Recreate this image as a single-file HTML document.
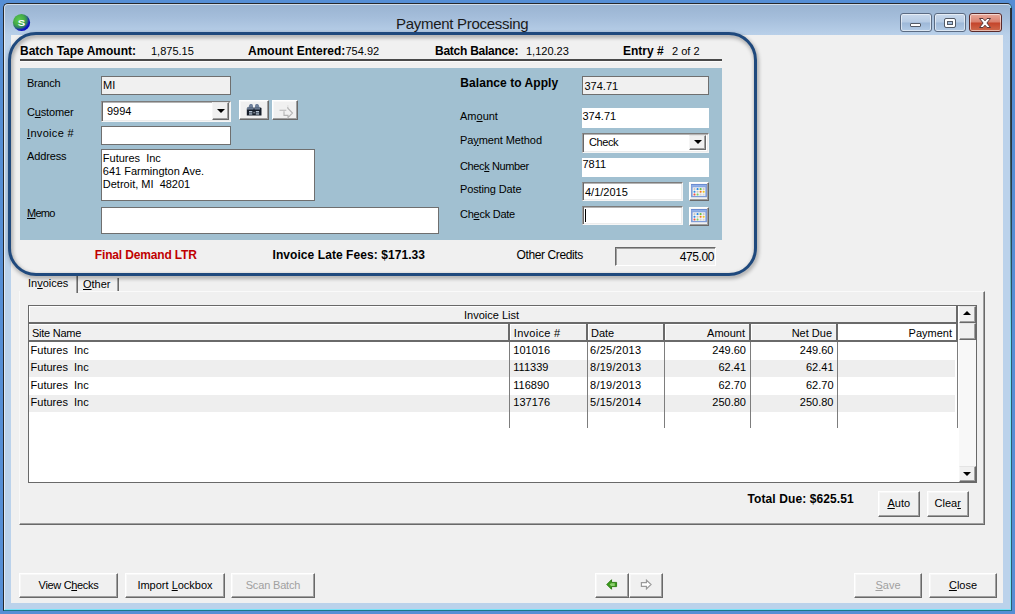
<!DOCTYPE html>
<html>
<head>
<meta charset="utf-8">
<title>Payment Processing</title>
<style>
*{box-sizing:border-box;margin:0;padding:0}
html,body{width:1015px;height:614px;overflow:hidden;background:#558ed5;font-family:"Liberation Sans",sans-serif;font-size:11px;color:#000}
.abs,.t,.b,.lbl{position:absolute}
#win{position:absolute;left:3px;top:3px;width:1009px;height:608px;border-radius:5px 5px 0 0;background:linear-gradient(#99b3d1 0px,#a5bedb 14px,#b9d0e9 31px,#bbd2eb 40px);border:1px solid #26282c;border-bottom-color:#1b7888;border-right-color:#2a5f70;box-shadow:inset -1px -1px 0 #7ae2f8}
#win:before{content:"";position:absolute;left:0;top:0;right:0;bottom:0;border-radius:4px 4px 0 0;border:1px solid rgba(255,255,255,.55);border-bottom:none;border-right:none}
#client{position:absolute;left:11px;top:35px;width:992.3px;height:568px;background:#f0f0f0}
.t{white-space:nowrap;line-height:14px;height:14px;font-size:11px}
.b{white-space:nowrap;line-height:14px;height:14px;font-size:12px;font-weight:bold}
u{text-decoration:underline;text-underline-offset:1px}
.btn{position:absolute;background:#f0f0f0;border:1px solid;border-color:#fff #696969 #696969 #fff;box-shadow:inset -1px -1px 0 #a0a0a0,inset 1px 1px 0 #f7f7f7;text-align:center;font-size:11px;line-height:23px;white-space:nowrap}
.dis{color:#a0a0a0}
.flat{position:absolute;background:#fff}
.ro{position:absolute;background:#f0f0f0;border:1px solid #6f6f6f}
.sunk{position:absolute;background:#fff;border:1px solid;border-color:#7c7c7c #f6f6f6 #f6f6f6 #9c9c9c;box-shadow:inset 1px 0 0 #686868,inset 0 1px 0 #b4b4b4,inset -1px -1px 0 #ececec}
.dd{position:absolute;background:#f0f0f0;border:1px solid;border-color:#e4e4e4 #696969 #696969 #f6f6f6;box-shadow:inset -1px -1px 0 #a0a0a0}
.dd:after{content:"";position:absolute;left:50%;top:50%;margin:-1.7px 0 0 -4px;border:4.5px solid transparent;border-top-color:#000;border-bottom:none}
.cap{position:absolute;top:13px;width:32px;height:19px;border:1px solid #5b6b82;border-radius:3px;background:linear-gradient(#c9d9ec 0,#b6cbe4 48%,#9db8d8 52%,#b3cbe6 100%);box-shadow:inset 0 0 0 1px rgba(255,255,255,.55)}
.cap i{position:absolute;background:#fff;border:1px solid #535a66;border-radius:1px}
.cl{width:33px;border-color:#5a2a2a;background:linear-gradient(#e8a99b 0,#d9806d 48%,#c4442a 52%,#cf6a4c 100%)}
.up:after{border:4.5px solid transparent;border-bottom-color:#000;border-top:none;margin-top:-2.6px}
.nt:after{display:none}
.pm:after{margin-top:-2.4px}
</style>
</head>
<body>
<div id="win"></div>
<!-- title bar -->
<svg class="abs" style="left:12px;top:13.2px" width="19" height="19" viewBox="0 0 19 19"><defs><radialGradient id="ig" cx="0.36" cy="0.34" r="0.66"><stop offset="0" stop-color="#5ccc4e"/><stop offset="0.5" stop-color="#44aa48"/><stop offset="0.72" stop-color="#2f7a6c"/><stop offset="0.88" stop-color="#1622b4"/><stop offset="1" stop-color="#0a0ac4"/></radialGradient></defs><circle cx="9.5" cy="9.5" r="8.6" fill="url(#ig)"/><text x="8.2" y="12.9" font-family="Liberation Sans" font-weight="bold" font-size="9.6" fill="#fff" text-anchor="middle" transform="scale(1.16 1)">S</text></svg>
<div id="title" class="abs" style="left:396px;top:13.8px;font-size:15px;letter-spacing:-0.29px;line-height:20px;white-space:nowrap;color:#1a1a1a">Payment Processing</div>
<div class="cap" style="left:900px"><i style="left:8.5px;top:8.5px;width:11px;height:4.5px"></i></div>
<div class="cap" style="left:934px"><i style="left:10px;top:4.5px;width:10px;height:8px;background:none;border:2px solid #fff;outline:1px solid #535a66;box-shadow:inset 0 0 0 1px #535a66"></i></div>
<div class="cap cl" style="left:969px"><svg style="position:absolute;left:8px;top:2.5px" width="14" height="12" viewBox="0 0 14 12"><path d="M1.5 1.5 L5 1.5 L7 3.8 L9 1.5 L12.5 1.5 L8.9 6 L12.5 10.5 L9 10.5 L7 8.2 L5 10.5 L1.5 10.5 L5.1 6 Z" fill="#fff" stroke="#5a3a3a" stroke-width="1"/></svg></div>
<div class="abs" style="left:1010px;top:8px;width:2px;height:330px;background:linear-gradient(rgba(40,42,46,.95),rgba(40,42,46,.8) 40%,rgba(40,42,46,0));"></div>
<div id="client"></div>
<!-- header strip -->
<div id="h1" class="b" style="left:20px;top:43.7px">Batch Tape Amount:</div>
<div id="h2" class="t" style="left:151px;top:43.7px">1,875.15</div>
<div id="h3" class="b" style="left:248px;top:43.7px">Amount Entered:</div>
<div id="h4" class="t" style="left:345.5px;top:43.7px">754.92</div>
<div id="h5" class="b" style="left:435px;letter-spacing:-0.25px;top:43.7px">Batch Balance:</div>
<div id="h6" class="t" style="left:526px;top:43.7px">1,120.23</div>
<div id="h7" class="b" style="left:623px;top:43.7px">Entry #</div>
<div id="h8" class="t" style="left:672px;top:43.7px">2 of 2</div>
<div class="abs" style="left:20px;top:59.3px;width:701.5px;height:1.6px;background:#484848"></div>
<div class="abs" style="left:20px;top:61px;width:701.5px;height:1px;background:#fbfbfb"></div>
<div id="panel" class="abs" style="left:20px;top:68px;width:702px;height:172px;background:#a1c0d1"></div>
<!-- left form -->
<div id="l1" class="t" style="left:27px;top:75.6px;letter-spacing:-0.25px">Branch</div>
<div id="l2" class="t" style="left:27px;top:104.8px;letter-spacing:-0.16px">C<u>u</u>stomer</div>
<div id="l3" class="t" style="left:27px;top:126.4px;letter-spacing:0.32px"><u>I</u>nvoice #</div>
<div id="l4" class="t" style="left:27px;top:149.1px;letter-spacing:-0.14px">Address</div>
<div id="l5" class="t" style="left:27px;top:206.4px;letter-spacing:-0.75px"><u>M</u>emo</div>
<div class="ro" style="left:101px;top:76px;width:130px;height:19px"></div>
<div id="v1" class="t" style="left:103px;top:78px">MI</div>
<div class="sunk" style="left:101px;top:101px;width:130.4px;height:20.6px"></div>
<div class="dd" style="left:212.2px;top:102px;width:16.8px;height:17.5px"></div>
<div id="v2" class="t" style="left:107px;top:104px">9994</div>
<div class="btn" style="left:239px;top:100px;width:30px;height:20px"><svg style="position:absolute;left:6px;top:2px" width="17" height="14" viewBox="0 0 17 14"><path d="M2.2 5.5 L3.2 2 L4.2 1 L6 1 L6.8 2 L7.2 5.5Z M8.8 5.5 L9.2 2 L10 1 L11.8 1 L12.8 2 L13.8 5.5Z" fill="#6f819c"/><path d="M1.5 4.6 L7.6 4.6 L7.6 5.4 L8.4 5.4 L8.4 4.6 L14.5 4.6 L15.5 5 L15.5 12.6 L0.8 12.6 L0.8 5.6Z" fill="#141c28"/><rect x="1" y="4.4" width="6.5" height="2.2" fill="#7788a2" opacity=".85"/><rect x="8.5" y="4.4" width="5.5" height="2.2" fill="#7788a2" opacity=".85"/><rect x="3" y="8" width="3.3" height="3.6" fill="#b4c2d2"/><rect x="9.8" y="8" width="3.3" height="3.6" fill="#b4c2d2"/><rect x="2.6" y="9.4" width="4.2" height=".9" fill="#2a3444"/><rect x="9.4" y="9.4" width="4.2" height=".9" fill="#2a3444"/><rect x="7.6" y="8.8" width=".9" height="1.6" fill="#dfe6ee"/></svg></div>
<div class="btn" style="left:272px;top:100px;width:26px;height:20px"><svg style="position:absolute;left:5px;top:4px" width="17" height="15" viewBox="0 0 17 15"><path d="M1.5 5.3 L8.3 5.3 M9.8 2 L9.8 3.2 L14.5 8 L10 12.6 L10 10.4 L6 10.4 L6 6.2" fill="none" stroke="#b4b4b4" stroke-width="1.1"/><path d="M9.9 0.6 L9.9 1.4" stroke="#c4c4c4" stroke-width="1"/></svg></div>
<div class="ro" style="left:101px;top:126px;width:130px;height:19px;background:#fff"></div>
<div class="ro" style="left:101px;top:149px;width:214px;height:52px;background:#fff"></div>
<div id="a1" class="t" style="left:102.8px;top:152.3px;line-height:13px;height:auto">Futures&nbsp; Inc<br>641 Farmington Ave.<br>Detroit, MI&nbsp; 48201</div>
<div class="ro" style="left:101px;top:207px;width:337.5px;height:27px;background:#fff"></div>
<!-- right form -->
<div id="r1" class="b" style="left:460.3px;top:76px;letter-spacing:0.06px">Balance to Apply</div>
<div id="r2" class="t" style="left:460px;top:109px">Am<u>o</u>unt</div>
<div id="r3" class="t" style="left:460px;top:133px;letter-spacing:-0.09px">Pa<u>y</u>ment Method</div>
<div id="r4" class="t" style="left:460px;top:158.7px;letter-spacing:-0.38px">Chec<u>k</u> Number</div>
<div id="r5" class="t" style="left:460px;top:182px;letter-spacing:-0.13px">Posting Date</div>
<div id="r6" class="t" style="left:460px;top:206.7px;letter-spacing:-0.25px">Ch<u>e</u>ck Date</div>
<div class="ro" style="left:582px;top:76px;width:127px;height:19px"></div>
<div id="w1" class="t" style="left:584.5px;top:78.5px">374.71</div>
<div class="flat" style="left:582px;top:108px;width:127px;height:20px"></div>
<div id="w2" class="t" style="left:582.5px;top:109px">374.71</div>
<div class="sunk" style="left:582px;top:133px;width:127px;height:20px"></div>
<div class="dd pm" style="left:689.2px;top:134.6px;width:17px;height:15.9px"></div>
<div id="w3" class="t" style="left:589px;top:135px;letter-spacing:-0.4px">Check</div>
<div class="flat" style="left:582px;top:158px;width:127px;height:19px"></div>
<div id="w4" class="t" style="left:582.5px;top:157px">7811</div>
<div class="sunk" style="left:582px;top:182px;width:101px;height:19px"></div>
<div id="w5" class="t" style="left:585px;top:185px">4/1/2015</div>
<div class="btn cal" style="left:689px;top:182px;width:20px;height:19px"><svg style="position:absolute;left:1px;top:1px" width="16" height="14" viewBox="0 0 16 14"><rect x="0" y="0" width="16" height="13.2" fill="#7d9cd9"/><rect x="0" y="0" width="16" height="1" fill="#6a8bd0"/><rect x="0.8" y="1" width="14.4" height="1.6" fill="#8fb0e8"/><rect x="1.6" y="3.3" width="12.8" height="8.6" fill="#f6f6f4"/><rect x="2.50" y="4.10" width="2" height="2" rx=".7" fill="#c8c8c8"/><rect x="5.55" y="4.10" width="2" height="2" rx=".7" fill="#2e8be6"/><rect x="8.60" y="4.10" width="2" height="2" rx=".7" fill="#6cc04a"/><rect x="11.65" y="4.10" width="2" height="2" rx=".7" fill="#c8c8c8"/><rect x="2.50" y="6.80" width="2" height="2" rx=".7" fill="#2e8be6"/><rect x="5.55" y="6.80" width="2" height="2" rx=".7" fill="#c8c8c8"/><rect x="8.60" y="6.80" width="2" height="2" rx=".7" fill="#f4772a"/><rect x="11.65" y="6.80" width="2" height="2" rx=".7" fill="#f0c81e"/><rect x="2.50" y="9.50" width="2" height="2" rx=".7" fill="#f0504a"/><rect x="5.55" y="9.50" width="2" height="2" rx=".7" fill="#7ccf5a"/><rect x="8.60" y="9.50" width="2" height="2" rx=".7" fill="#d8d8d8"/><rect x="11.65" y="9.50" width="2" height="2" rx=".7" fill="#d8d8d8"/></svg></div>
<div class="sunk" style="left:582px;top:206px;width:101px;height:19px"></div>
<div class="abs" style="left:585px;top:209px;width:1px;height:13px;background:#000"></div>
<div class="btn cal" style="left:689px;top:206.5px;width:20px;height:19px"><svg style="position:absolute;left:1px;top:1px" width="16" height="14" viewBox="0 0 16 14"><rect x="0" y="0" width="16" height="13.2" fill="#7d9cd9"/><rect x="0" y="0" width="16" height="1" fill="#6a8bd0"/><rect x="0.8" y="1" width="14.4" height="1.6" fill="#8fb0e8"/><rect x="1.6" y="3.3" width="12.8" height="8.6" fill="#f6f6f4"/><rect x="2.50" y="4.10" width="2" height="2" rx=".7" fill="#c8c8c8"/><rect x="5.55" y="4.10" width="2" height="2" rx=".7" fill="#2e8be6"/><rect x="8.60" y="4.10" width="2" height="2" rx=".7" fill="#6cc04a"/><rect x="11.65" y="4.10" width="2" height="2" rx=".7" fill="#c8c8c8"/><rect x="2.50" y="6.80" width="2" height="2" rx=".7" fill="#2e8be6"/><rect x="5.55" y="6.80" width="2" height="2" rx=".7" fill="#c8c8c8"/><rect x="8.60" y="6.80" width="2" height="2" rx=".7" fill="#f4772a"/><rect x="11.65" y="6.80" width="2" height="2" rx=".7" fill="#f0c81e"/><rect x="2.50" y="9.50" width="2" height="2" rx=".7" fill="#f0504a"/><rect x="5.55" y="9.50" width="2" height="2" rx=".7" fill="#7ccf5a"/><rect x="8.60" y="9.50" width="2" height="2" rx=".7" fill="#d8d8d8"/><rect x="11.65" y="9.50" width="2" height="2" rx=".7" fill="#d8d8d8"/></svg></div>
<!-- bottom strip -->
<div id="f1" class="b" style="left:94.8px;top:248px;color:#c00000;letter-spacing:-0.16px">Final Demand LTR</div>
<div id="f2" class="b" style="left:272.5px;top:248px;letter-spacing:0.07px">Invoice Late Fees: $171.33</div>
<div id="f3" class="t" style="left:516.5px;top:247.5px;font-size:12px;letter-spacing:-0.38px">Other Credits</div>
<div class="abs" style="left:615px;top:247px;width:101px;height:19px;background:#f0f0f0;border:1px solid;border-color:#696969 #fff #fff #696969;box-shadow:inset 1px 1px 0 #a0a0a0"></div>
<div id="f4" class="t" style="left:640px;width:74px;text-align:right;top:249.7px;font-size:12px;letter-spacing:-0.4px">475.00</div>
<!-- tabs -->
<div class="abs" style="left:19px;top:291px;width:965.6px;height:233.5px;border:1px solid;border-color:#fafafa #696969 #696969 #f8f8f8;box-shadow:inset -1px -1px 0 #a0a0a0"></div>
<div class="abs" style="left:20px;top:276px;width:58px;height:17px;background:#f0f0f0;border-right:1px solid #696969;box-shadow:inset -1px 0 0 #a0a0a0"></div>
<div class="abs" style="left:78px;top:278px;width:41px;height:13px;border-right:1px solid #696969;box-shadow:inset -1px 0 0 #a0a0a0"></div>
<div id="tb1" class="t" style="left:28px;top:276px">In<u>v</u>oices</div>
<div id="tb2" class="t" style="left:83px;top:277px"><u>O</u>ther</div>
<!-- grid -->
<div class="abs" style="left:27.5px;top:304.5px;width:949px;height:178.5px;background:#fff;border:1px solid #696969"></div>
<div class="abs" style="left:28.5px;top:305.5px;width:929.5px;height:18.5px;background:#f0f0f0;border-bottom:2px solid #6a6a6a;border-right:2px solid #6a6a6a;box-shadow:inset 1px 1px 0 #fff"></div>
<div id="gl" class="t" style="left:464px;top:307.7px">Invoice List</div>
<div class="abs" style="left:28.5px;top:324px;width:809px;height:18px;background:#f0f0f0;border-bottom:2px solid #6a6a6a;box-shadow:inset 0 1px 0 #fff"></div>
<div class="abs" style="left:837.5px;top:324px;width:120.5px;height:18px;background:#fff;border-bottom:2px solid #6a6a6a;border-right:2px solid #6a6a6a"></div>
<div class="abs" style="left:509px;top:342px;width:1px;height:86px;background:#7d7d7d"></div>
<div class="abs" style="left:508px;top:324px;width:2px;height:16px;background:#6a6a6a;box-shadow:1px 0 0 #fff"></div>
<div class="abs" style="left:586.5px;top:342px;width:1px;height:86px;background:#7d7d7d"></div>
<div class="abs" style="left:585.5px;top:324px;width:2px;height:16px;background:#6a6a6a;box-shadow:1px 0 0 #fff"></div>
<div class="abs" style="left:663.5px;top:342px;width:1px;height:86px;background:#7d7d7d"></div>
<div class="abs" style="left:662.5px;top:324px;width:2px;height:16px;background:#6a6a6a;box-shadow:1px 0 0 #fff"></div>
<div class="abs" style="left:749.5px;top:342px;width:1px;height:86px;background:#7d7d7d"></div>
<div class="abs" style="left:748.5px;top:324px;width:2px;height:16px;background:#6a6a6a;box-shadow:1px 0 0 #fff"></div>
<div class="abs" style="left:837px;top:342px;width:1px;height:86px;background:#7d7d7d"></div>
<div class="abs" style="left:836px;top:324px;width:2px;height:16px;background:#6a6a6a;box-shadow:1px 0 0 #fff"></div>
<div class="abs" style="left:956.5px;top:342px;width:1px;height:86px;background:#7d7d7d"></div>
<div class="abs" style="left:28.5px;top:359.9px;width:480.5px;height:17.4px;background:#eeeeee"></div>
<div class="abs" style="left:510px;top:359.9px;width:76.5px;height:17.4px;background:#eeeeee"></div>
<div class="abs" style="left:587.5px;top:359.9px;width:76.0px;height:17.4px;background:#eeeeee"></div>
<div class="abs" style="left:664.5px;top:359.9px;width:85.0px;height:17.4px;background:#eeeeee"></div>
<div class="abs" style="left:750.5px;top:359.9px;width:86.5px;height:17.4px;background:#eeeeee"></div>
<div class="abs" style="left:838px;top:359.9px;width:117px;height:17.4px;background:#eeeeee"></div>
<div class="abs" style="left:28.5px;top:394.7px;width:480.5px;height:17.4px;background:#eeeeee"></div>
<div class="abs" style="left:510px;top:394.7px;width:76.5px;height:17.4px;background:#eeeeee"></div>
<div class="abs" style="left:587.5px;top:394.7px;width:76.0px;height:17.4px;background:#eeeeee"></div>
<div class="abs" style="left:664.5px;top:394.7px;width:85.0px;height:17.4px;background:#eeeeee"></div>
<div class="abs" style="left:750.5px;top:394.7px;width:86.5px;height:17.4px;background:#eeeeee"></div>
<div class="abs" style="left:838px;top:394.7px;width:117px;height:17.4px;background:#eeeeee"></div>
<div id="c1" class="t" style="left:32px;top:326px;letter-spacing:-0.25px">Site Name</div>
<div id="c2" class="t" style="left:513.8px;top:326.1px;letter-spacing:0.3px">Invoice #</div>
<div id="c3" class="t" style="left:591px;top:326px">Date</div>
<div id="c4" class="t" style="left:660px;width:85px;text-align:right;top:326px">Amount</div>
<div id="c5" class="t" style="left:750px;width:82px;text-align:right;top:326px">Net Due</div>
<div id="c6" class="t" style="left:850px;width:102px;text-align:right;top:326px">Payment</div>
<div id="ra0" class="t" style="left:30.6px;top:343.0px">Futures&nbsp; Inc</div><div id="rb0" class="t" style="left:513.3px;top:343.0px">101016</div><div id="rc0" class="t" style="left:590px;top:343.0px;letter-spacing:0.26px">6/25/2013</div><div id="rd0" class="t" style="left:660px;width:86px;text-align:right;top:343.0px">249.60</div><div id="re0" class="t" style="left:750px;width:83.5px;text-align:right;top:343.0px">249.60</div>
<div id="ra1" class="t" style="left:30.6px;top:360.4px">Futures&nbsp; Inc</div><div id="rb1" class="t" style="left:513.3px;top:360.4px">111339</div><div id="rc1" class="t" style="left:590px;top:360.4px;letter-spacing:0.26px">8/19/2013</div><div id="rd1" class="t" style="left:660px;width:86px;text-align:right;top:360.4px">62.41</div><div id="re1" class="t" style="left:750px;width:83.5px;text-align:right;top:360.4px">62.41</div>
<div id="ra2" class="t" style="left:30.6px;top:377.8px">Futures&nbsp; Inc</div><div id="rb2" class="t" style="left:513.3px;top:377.8px">116890</div><div id="rc2" class="t" style="left:590px;top:377.8px;letter-spacing:0.26px">8/19/2013</div><div id="rd2" class="t" style="left:660px;width:86px;text-align:right;top:377.8px">62.70</div><div id="re2" class="t" style="left:750px;width:83.5px;text-align:right;top:377.8px">62.70</div>
<div id="ra3" class="t" style="left:30.6px;top:395.2px">Futures&nbsp; Inc</div><div id="rb3" class="t" style="left:513.3px;top:395.2px">137176</div><div id="rc3" class="t" style="left:590px;top:395.2px;letter-spacing:0.26px">5/15/2014</div><div id="rd3" class="t" style="left:660px;width:86px;text-align:right;top:395.2px">250.80</div><div id="re3" class="t" style="left:750px;width:83.5px;text-align:right;top:395.2px">250.80</div>
<!-- scrollbar -->
<div class="abs" style="left:958.5px;top:305.5px;width:17px;height:176.5px;background:#f8f8f8"></div>
<div class="dd up" style="left:959px;top:305.5px;width:16.5px;height:17px"></div>
<div class="dd nt" style="left:959px;top:322.5px;width:16.5px;height:17px"></div>
<div class="dd" style="left:959px;top:466px;width:16.5px;height:16px"></div>
<div id="td" class="b" style="left:747.5px;top:491.6px;letter-spacing:0.1px">Total Due: $625.51</div>
<div class="btn" style="left:878px;top:491.2px;width:41.5px;height:25.5px;line-height:22.6px"><u>A</u>uto</div>
<div class="btn" style="left:927px;top:491.2px;width:41.5px;height:25.5px;line-height:22.6px">Clea<u>r</u></div>
<!-- bottom buttons -->
<div class="btn" style="left:19px;top:573px;width:99px;height:25px;letter-spacing:-0.33px">View C<u>h</u>ecks</div>
<div class="btn" style="left:125px;top:573px;width:100px;height:25px">Import <u>L</u>ockbox</div>
<div class="btn dis" style="left:231px;top:573px;width:84px;height:25px;letter-spacing:-0.16px">Scan Batch</div>
<div class="btn" style="left:595px;top:573px;width:34px;height:25px"><svg style="position:absolute;left:9.7px;top:4.8px" width="12" height="11" viewBox="0 0 13 12"><path d="M6 0.8 L0.8 6 L6 11.2 L6 8.3 L11.5 8.3 L11.5 3.7 L6 3.7 Z" fill="#3a9a1a" stroke="#2a7a10" stroke-width="1"/><path d="M5.5 4.5 L4 6 L5.5 7.5 L9.5 7.5 L9.5 4.5Z" fill="#8fd070"/></svg></div>
<div class="btn" style="left:629px;top:573px;width:34px;height:25px"><svg style="position:absolute;left:9.5px;top:5px" width="12" height="11" viewBox="0 0 13 12"><path d="M7 1.2 L12 6 L7 10.8 L7 8 L1.5 8 L1.5 4 L7 4 Z" fill="#fff" stroke="#9a9a9a" stroke-width="1.3"/></svg></div>
<div class="btn dis" style="left:854px;top:573px;width:68px;height:25px"><u>S</u>ave</div>
<div class="btn" style="left:929px;top:573px;width:68px;height:25px"><u>C</u>lose</div>
<!-- highlight rounded rect -->
<div id="hl" class="abs" style="left:8px;top:32px;width:749px;height:244px;border:3.2px solid #1f497d;border-radius:28px;filter:drop-shadow(1.5px 2px 2px rgba(0,0,0,.45))"></div>
</body>
</html>
